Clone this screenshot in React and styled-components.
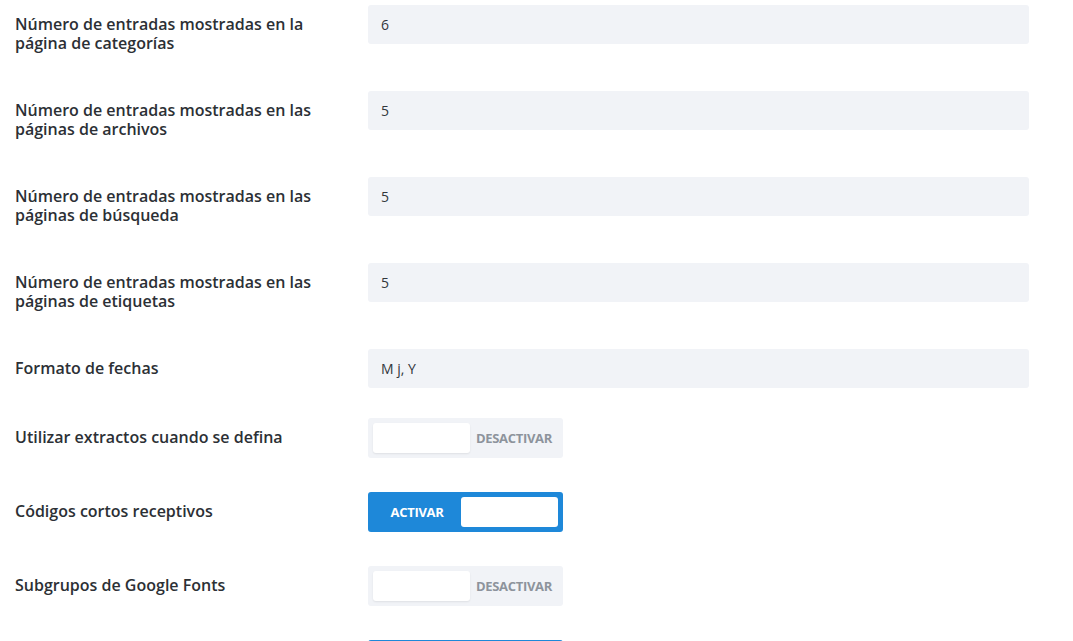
import React from 'react';
import styled, { createGlobalStyle } from 'styled-components';

const GlobalStyle = createGlobalStyle`
  html, body {
    margin: 0;
    padding: 0;
    background: #ffffff;
  }
  body {
    font-family: "Open Sans", "Noto Sans", sans-serif;
    -webkit-font-smoothing: antialiased;
  }
`;

const Page = styled.div`
  padding: 5px 0 0 15px;
  width: 1014px;
  height: 636px;
  overflow: hidden;
`;

const Row = styled.div`
  display: flex;
  align-items: flex-start;
  height: ${({ $pitch }) => $pitch}px;
`;

const Label = styled.div`
  width: 330px;
  margin-right: 23px;
  padding-top: ${({ $offset }) => $offset}px;
  font-size: 16px;
  font-weight: 600;
  line-height: 19px;
  color: #2c3035;
`;

const TextInput = styled.div`
  box-sizing: border-box;
  width: 661px;
  height: 39px;
  padding: 0 13px;
  display: flex;
  align-items: center;
  background: #f1f3f7;
  border-radius: 3px;
  font-size: 14px;
  color: #32373c;
`;

const Toggle = styled.div`
  box-sizing: border-box;
  width: 195px;
  height: 40px;
  padding: 5px;
  display: flex;
  flex-direction: ${({ $on }) => ($on ? 'row' : 'row-reverse')};
  align-items: center;
  justify-content: space-between;
  background: ${({ $on }) => ($on ? '#1e88d9' : '#f1f3f7')};
  border-radius: 3px;
`;

const Knob = styled.div`
  width: 97px;
  height: 30px;
  background: #ffffff;
  border-radius: 3px;
  box-shadow: ${({ $on }) => ($on ? 'none' : '0 1px 2px rgba(0, 0, 0, 0.08)')};
`;

const ToggleText = styled.span`
  flex: 1;
  text-align: center;
  font-size: 13px;
  font-weight: 700;
  letter-spacing: -0.3px;
  text-transform: uppercase;
  color: ${({ $on }) => ($on ? '#ffffff' : '#8d939c')};
`;

const fields = [
  { label: 'Número de entradas mostradas en la página de categorías', value: '6' },
  { label: 'Número de entradas mostradas en las páginas de archivos', value: '5' },
  { label: 'Número de entradas mostradas en las páginas de búsqueda', value: '5' },
  { label: 'Número de entradas mostradas en las páginas de etiquetas', value: '5' },
];

const toggles = [
  { label: 'Utilizar extractos cuando se defina', on: false },
  { label: 'Códigos cortos receptivos', on: true },
  { label: 'Subgrupos de Google Fonts', on: false },
];

const App = () => (
  <>
    <GlobalStyle />
    <Page>
      {fields.map((f) => (
        <Row key={f.label} $pitch={86}>
          <Label $offset={10}>{f.label}</Label>
          <TextInput>{f.value}</TextInput>
        </Row>
      ))}
      <Row $pitch={69}>
        <Label $offset={10}>Formato de fechas</Label>
        <TextInput>M j, Y</TextInput>
      </Row>
      {toggles.map((t) => (
        <Row key={t.label} $pitch={74}>
          <Label $offset={10}>{t.label}</Label>
          <Toggle $on={t.on}>
            <ToggleText $on={t.on}>{t.on ? 'Activar' : 'Desactivar'}</ToggleText>
            <Knob $on={t.on} />
          </Toggle>
        </Row>
      ))}
      <Row $pitch={74}>
        <Label $offset={10} />
        <Toggle $on />
      </Row>
    </Page>
  </>
);

export default App;
